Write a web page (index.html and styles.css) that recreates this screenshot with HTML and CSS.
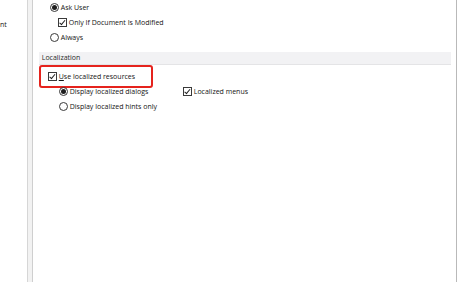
FILE: index.html
```html
<!DOCTYPE html>
<html lang="en">
<head>
    <meta charset="UTF-8">
    <title>Options - Localization</title>
    <link rel="stylesheet" href="styles.css">
</head>
<body>
    <div class="tree">
        <div class="tree-item">nt</div>
    </div>
    <div class="splitter"></div>
    <div class="page">
        <div class="group">
            <div class="row"><span class="radio checked"></span>Ask User</div>
            <div class="row sub"><span class="check checked"></span>Only If Document Is Modified</div>
            <div class="row"><span class="radio"></span>Always</div>
        </div>

        <div class="section-title">Localization</div>

        <div class="group loc">
            <div class="row highlight-row">
                <span class="check checked"></span><span><u>U</u>se localized resources</span>
                <div class="highlight"></div>
            </div>
            <div class="row sub split">
                <div class="cell"><span class="radio checked"></span>Display localized dialogs</div>
                <div class="cell"><span class="check checked"></span>Localized menus</div>
            </div>
            <div class="row sub"><span class="radio"></span>Display localized hints only</div>
        </div>
    </div>
    <div class="outside"></div>
</body>
</html>
```

FILE: styles.css
```css
body {
    margin: 0;
    height: 282px;
    display: flex;
    background: #fff;
    font-family: "Open Sans", "Liberation Sans", sans-serif;
    font-size: 7px;
    color: #141414;
    overflow: hidden;
}
.tree {
    width: 27px;
    overflow: hidden;
}
.tree-item {
    margin-top: 19px;
    line-height: 12px;
}
.splitter {
    width: 4px;
    background: #f2f2f2;
    border-left: 1px solid #d6d6d6;
    border-right: 1px solid #cfcfcf;
}
.page {
    width: 416px;
    padding: 0 5px 0 6px;
    border-right: 1px solid #b9b9b9;
}
.outside {
    flex: 1;
}
.group {
    padding-left: 11px;
}
.group.loc {
    padding-left: 9px;
    margin-top: 4px;
}
.row {
    height: 15px;
    display: flex;
    align-items: center;
    white-space: nowrap;
}
.row.sub {
    padding-left: 8px;
}
.group.loc .row.sub {
    padding-left: 11px;
}
.split .cell {
    display: flex;
    align-items: center;
}
.split .cell:first-child {
    width: 124px;
}
.radio {
    width: 7px;
    height: 7px;
    border: 1px solid #3a3a3a;
    border-radius: 50%;
    margin-right: 2px;
    position: relative;
    flex: none;
}
.radio.checked::after {
    content: "";
    position: absolute;
    left: 1px;
    top: 1px;
    width: 5px;
    height: 5px;
    border-radius: 50%;
    background: #1e1e1e;
}
.check {
    width: 7px;
    height: 7px;
    border: 1px solid #3a3a3a;
    margin-right: 2px;
    position: relative;
    flex: none;
}
.check.checked::after {
    content: "";
    position: absolute;
    left: 2.5px;
    top: 0;
    width: 2px;
    height: 4.5px;
    border-right: 1px solid #1e1e1e;
    border-bottom: 1px solid #1e1e1e;
    transform: rotate(40deg);
}
.section-title {
    margin-top: 7px;
    height: 12px;
    line-height: 12px;
    padding-left: 3px;
    background: #f2f2f4;
    border-bottom: 1px solid #e4e4e6;
    color: #2a2a2a;
}
.highlight-row {
    position: relative;
}
.highlight {
    position: absolute;
    left: -9px;
    top: -4px;
    width: 110px;
    height: 19px;
    border: 2px solid #e5231d;
    border-radius: 3px;
}
```
